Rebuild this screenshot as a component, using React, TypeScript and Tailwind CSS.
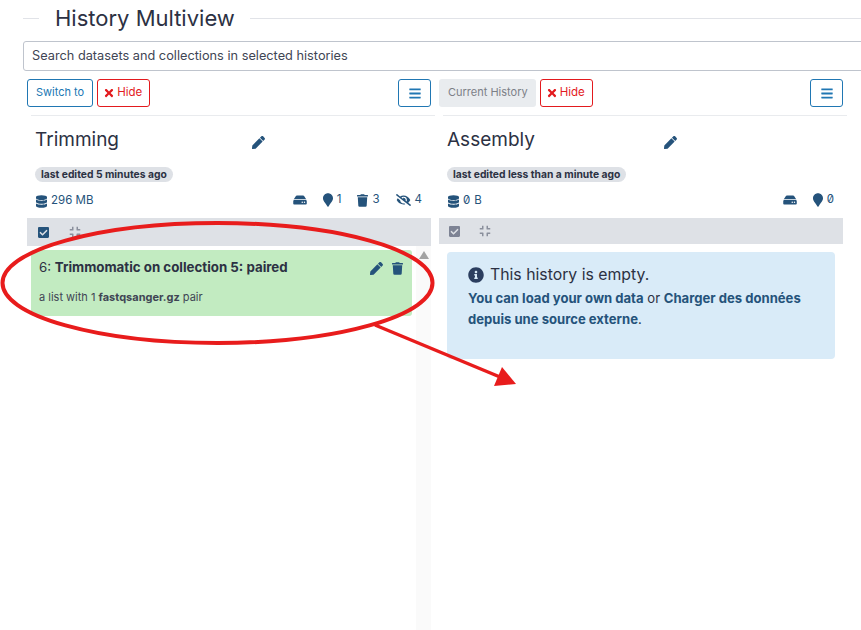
import React from "react";
import { FaPen, FaTrash, FaDatabase, FaHdd, FaMapMarker, FaEyeSlash, FaCheckSquare, FaCompress, FaInfoCircle, FaTimes, FaBars } from "react-icons/fa";

const Z = () => <span className="[font-feature-settings:'zero']">0</span>;

function Stat({ icon, children }: { icon: React.ReactNode; children?: React.ReactNode }) {
  return (
    <span className="flex items-center gap-[4px]">
      {icon}
      {children}
    </span>
  );
}

function Column({
  current,
  name,
  edited,
  stats,
  size,
  list,
  barClass,
}: {
  current: boolean;
  name: string;
  edited: string;
  stats: React.ReactNode;
  size: React.ReactNode;
  list: React.ReactNode;
  barClass: string;
}) {
  return (
    <div className="flex w-[404px] shrink-0 flex-col">
      <div className="flex h-[28px] items-stretch gap-[4px] text-[11px]">
        {current ? (
          <span className="flex items-center rounded-[3px] bg-[#e9ecef] pr-[8px] pb-[1px] pl-[9px] text-[#7c8087]">Current History</span>
        ) : (
          <span className="flex items-center rounded-[3px] border border-[#2077b3] px-[8px] pb-[1px] text-[#2077b3]">Switch to</span>
        )}
        <span className="flex items-center gap-[3px] rounded-[3px] border border-[#e31a1e] pr-[7px] pl-[6px] text-[11.5px] text-[#e31a1e]">
          <FaTimes className="h-[12px] w-[10px]" />
          Hide
        </span>
        <span className="ml-auto flex w-[33px] items-center justify-center rounded-[3px] border border-[#2077b3] text-[#2077b3]">
          <FaBars className="h-[13px] w-[12px]" />
        </span>
      </div>
      <div className="mt-[8px] ml-[4px] h-px w-[404px] bg-[#e9ebee]" />
      <div className="px-[8px]">
        <div className="mt-[12px] flex h-[24px] items-center">
          <span className="w-[217px] text-[19px] leading-[24px] text-[#2c3143]">{name}</span>
          <FaPen className="mt-[4px] h-[13px] w-[13px] text-[#25537b]" />
        </div>
        <div className="mt-[15px] flex">
          <span className="rounded-full bg-[#dee1e6] px-[6px] text-[10.3px] leading-[15px] font-bold text-[#2c3143]">{edited}</span>
        </div>
        <div className="mt-[11px] flex h-[16px] items-center justify-between pr-[1px] text-[11.5px] text-[#25537b]">
          <span className="pl-px">
            <Stat icon={<FaDatabase className="h-[13px] w-[11px]" />}>{size}</Stat>
          </span>
          <div className="mb-[2px] flex items-center gap-[16px]">{stats}</div>
        </div>
      </div>
      <div className={`mt-[9px] flex items-center bg-[#dee1e6] ${barClass}`}>
        <FaCheckSquare className={`h-[13px] w-[11px] ${current ? "text-[#7d8394]" : "text-[#25537b]"}`} />
        <FaCompress className="h-[12px] w-[12px] text-[#8a8f9c]" />
      </div>
      {list}
    </div>
  );
}

export default function App() {
  return (
    <div className="relative h-[630px] w-[861px] overflow-hidden bg-white text-[#2c3143] [font-family:'Inter','Liberation_Sans',sans-serif]">
      <div className="flex h-[37px] items-center pl-[23px]">
        <div className="h-px w-[16px] bg-[#e1e3e8]" />
        <h1 className="mr-[15px] ml-[16px] text-[22px] leading-[37px] font-normal text-[#2c3143]">History Multiview</h1>
        <div className="h-px flex-1 bg-[#e1e3e8]" />
      </div>
      <div className="mt-[4px] -mr-[10px] ml-[23px] flex h-[30px] items-center rounded-[3px] border border-[#bfc4cd] pl-[8px] text-[12.75px] text-[#3f4554]">
        Search datasets and collections in selected histories
      </div>
      <div className="mt-[8px] flex gap-[8px] pl-[27px]">
        <Column
          current={false}
          name="Trimming"
          edited="last edited 5 minutes ago"
          size="296 MB"
          barClass="h-[28px] gap-[20px] pl-[11px]"
          stats={
            <>
              <Stat icon={<FaHdd className="h-[12px] w-[14px]" />} />
              <Stat icon={<FaMapMarker className="h-[14px] w-[10px]" />}>1</Stat>
              <Stat icon={<FaTrash className="h-[13px] w-[11px]" />}>3</Stat>
              <Stat icon={<FaEyeSlash className="h-[12px] w-[15px]" />}>4</Stat>
            </>
          }
          list={
            <div className="flex h-[384px]">
              <div className="mt-[4px] ml-[4px] h-[66px] w-[381px] rounded-[3px] bg-[#c2ebc1] px-[8px] pt-[10px]">
                <div className="flex h-[16px] items-center justify-between pr-[1px] text-[13.3px]">
                  <span>
                    6: <b>Trimmomatic on collection 5: paired</b>
                  </span>
                  <span className="flex items-center gap-[9px] text-[#25537b]">
                    <FaPen className="h-[13px] w-[13px]" />
                    <FaTrash className="h-[13px] w-[11px]" />
                  </span>
                </div>
                <div className="mt-[14px] text-[11px] leading-[14px] text-[#3f4554]">
                  a list with 1 <b>fastqsanger.gz</b> pair
                </div>
              </div>
              <div className="ml-[4px] flex w-[15px] justify-center bg-[#fafafa] pt-[5px]">
                <svg width="10" height="8" viewBox="0 0 10 8">
                  <polygon points="5,0 10,8 0,8" fill="#a3a3a3" />
                </svg>
              </div>
            </div>
          }
        />
        <Column
          current
          name="Assembly"
          edited="last edited less than a minute ago"
          size={
            <>
              <Z /> B
            </>
          }
          barClass="h-[26px] gap-[19px] pl-[10px]"
          stats={
            <>
              <Stat icon={<FaHdd className="h-[12px] w-[14px]" />} />
              <Stat icon={<FaMapMarker className="h-[14px] w-[10px]" />}>
                <Z />
              </Stat>
            </>
          }
          list={
            <div className="mt-[8px] ml-[8px] h-[107px] w-[388px] rounded-[4px] bg-[#d9ebf8] px-[21px] pt-[13px]">
              <div className="flex items-center gap-[6px] text-[15.8px] leading-[20px]">
                <FaInfoCircle className="h-[16px] w-[16px] text-[#2c3e5f]" />
                This history is empty.
              </div>
              <div className="mt-[3px] text-[13.1px] leading-[21px] text-[#2c3143]">
                <b className="text-[#25537b]">You can load your own data</b> or <b className="text-[#25537b]">Charger des données</b>
                <br />
                <b className="text-[#25537b]">depuis une source externe</b>.
              </div>
            </div>
          }
        />
      </div>
      <svg className="pointer-events-none absolute top-0 left-0" width="861" height="630" viewBox="0 0 861 630">
        <ellipse cx="217.5" cy="283" rx="215" ry="60" fill="none" stroke="#e81c1c" strokeWidth="4" />
        <line x1="375" y1="325" x2="500" y2="377" stroke="#e81c1c" strokeWidth="3.5" />
        <polygon points="502,367 516,384 494,386" fill="#e81c1c" />
      </svg>
    </div>
  );
}
